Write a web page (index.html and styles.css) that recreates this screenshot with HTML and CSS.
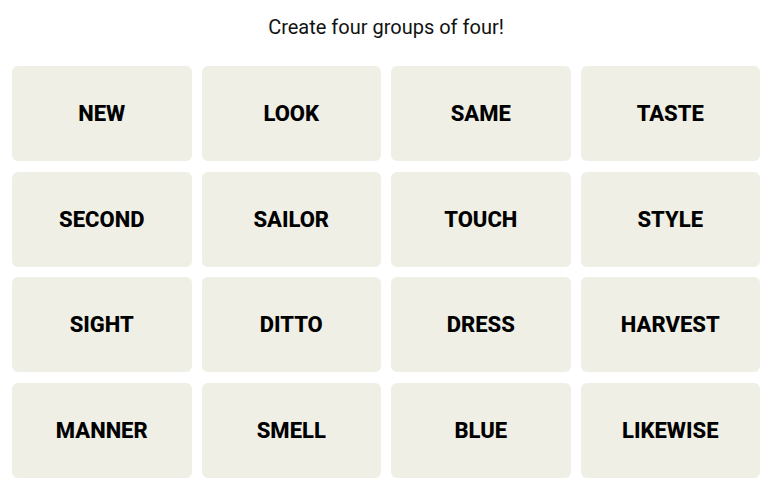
FILE: index.html
```html
<!DOCTYPE html>
<html lang="en">
<head>
    <meta charset="UTF-8">
    <meta name="viewport" content="width=device-width, initial-scale=1.0">
    <title>Connections</title>
    <link rel="stylesheet" href="styles.css">
</head>
<body>
    <div class="game">
        <p class="prompt">Create four groups of four!</p>
        <div class="board">
            <button class="tile">NEW</button>
            <button class="tile">LOOK</button>
            <button class="tile">SAME</button>
            <button class="tile">TASTE</button>
            <button class="tile">SECOND</button>
            <button class="tile">SAILOR</button>
            <button class="tile">TOUCH</button>
            <button class="tile">STYLE</button>
            <button class="tile">SIGHT</button>
            <button class="tile">DITTO</button>
            <button class="tile">DRESS</button>
            <button class="tile">HARVEST</button>
            <button class="tile">MANNER</button>
            <button class="tile">SMELL</button>
            <button class="tile">BLUE</button>
            <button class="tile">LIKEWISE</button>
        </div>
    </div>
</body>
</html>
```

FILE: styles.css
```css
/* Basic styling */
body { margin: 0; background: #fff; font-family: Roboto, "Liberation Sans", sans-serif; color: #000; }
.game { padding: 0 8px 0 12px; }
.prompt { margin: 0; padding-top: 14px; height: 66px; box-sizing: border-box; text-align: center; font-size: 20px; line-height: 26px; color: #121212; }
.board { display: grid; grid-template-columns: repeat(4, 1fr); grid-auto-rows: 95px; column-gap: 10px; row-gap: 10.7px; }
.tile { border: none; border-radius: 6px; background: #efefe6; font-family: Roboto, "Liberation Sans", sans-serif; font-size: 22px; font-weight: 800; color: #000; cursor: pointer; padding: 0; }
```
